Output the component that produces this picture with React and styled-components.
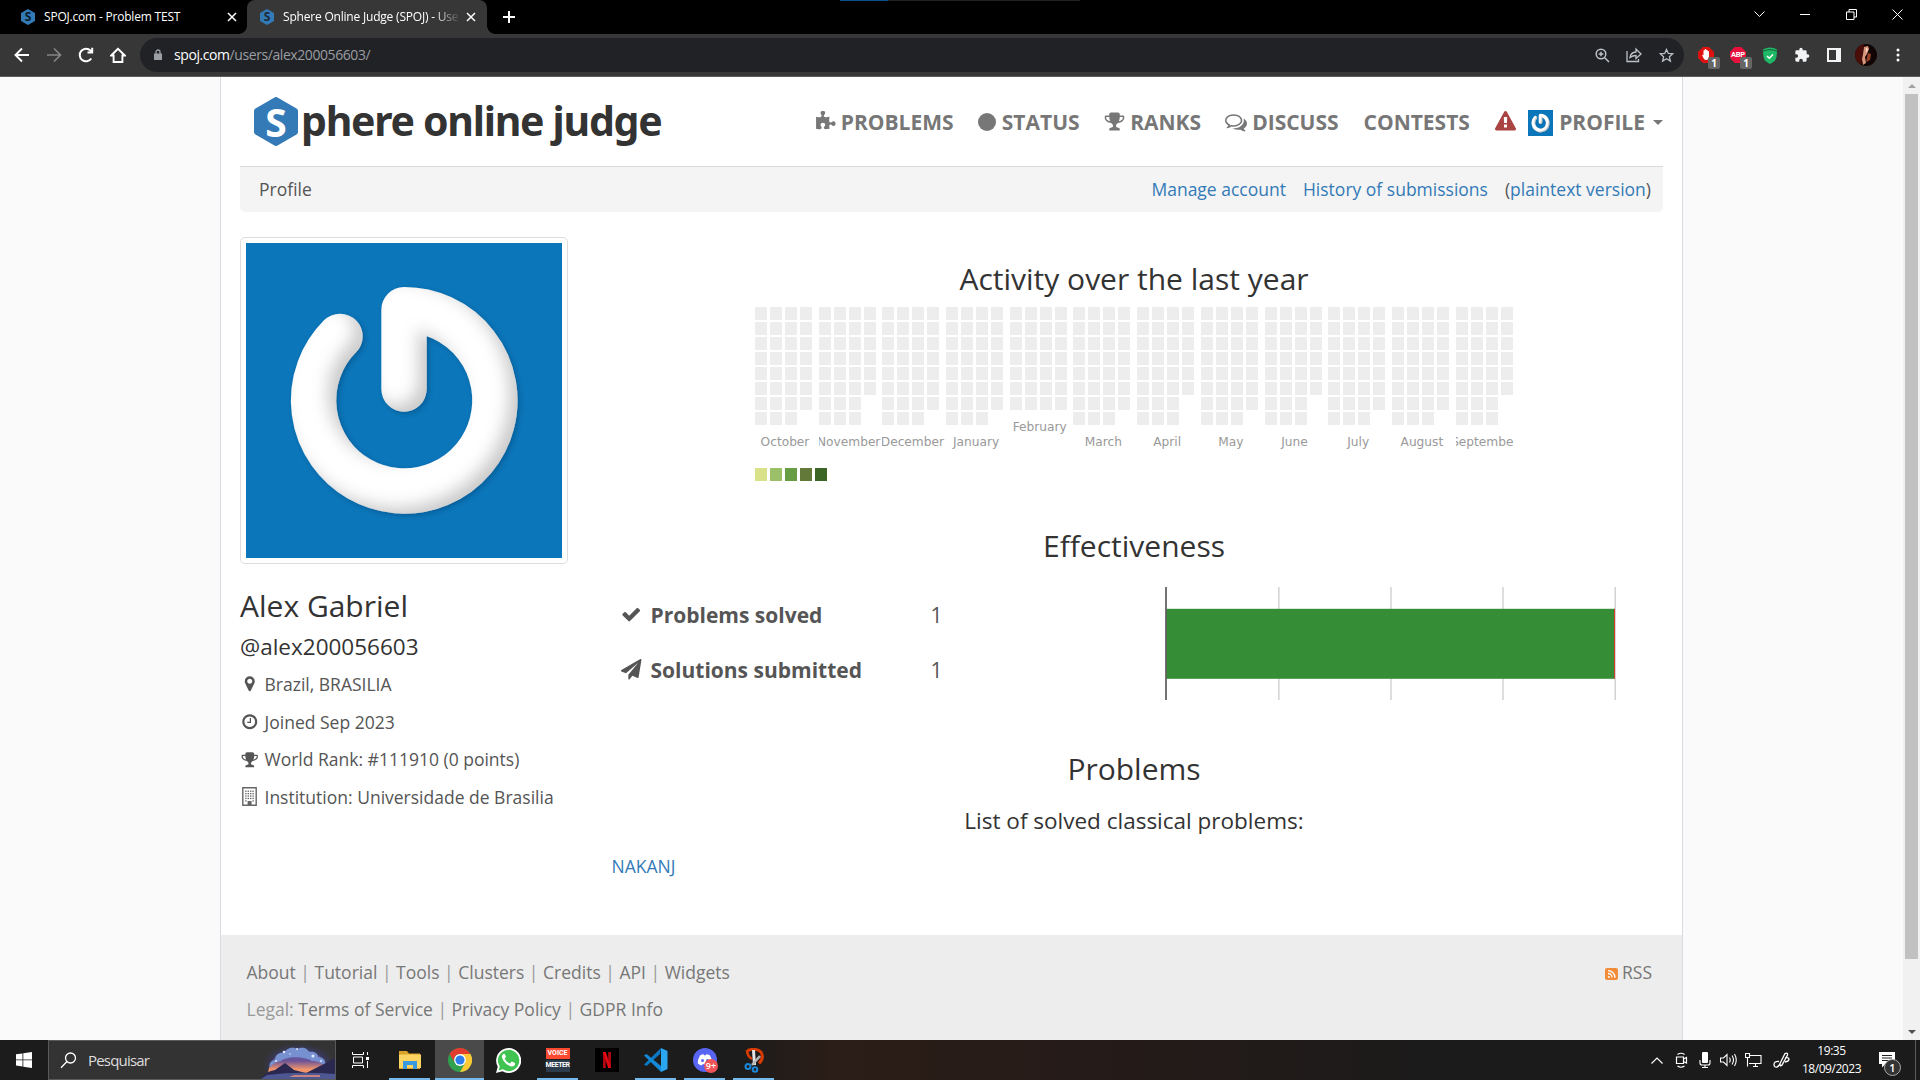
import React from "react";
import styled, { createGlobalStyle, css } from "styled-components";

const sans = `"Open Sans", "Noto Sans", sans-serif`;

const Global = createGlobalStyle`
  * { box-sizing: border-box; }
  html, body { margin: 0; padding: 0; background: #000; overflow: hidden; }
  body { font-family: ${sans}; font-size: 17.5px; color: #555; }
  svg { display: block; flex: none; }
`;

const Screen = styled.div`
  width: 1920px;
  height: 1080px;
  display: flex;
  flex-direction: column;
  overflow: hidden;
`;

/* ---------- browser chrome ---------- */
const TabStrip = styled.div`
  position: relative;
  height: 34px;
  flex: none;
  display: flex;
  background: #000;
`;
const SnapHint = styled.div`
  position: absolute;
  top: 0;
  left: 840px;
  width: 240px;
  height: 1px;
  background: linear-gradient(90deg, #0b4f8c 48px, #222 48px);
`;
const Tab = styled.div`
  position: relative;
  width: ${(p) => p.$w}px;
  height: 34px;
  display: flex;
  align-items: center;
  padding: 0 ${(p) => p.$end}px 0 ${(p) => p.$pad}px;
  color: #fff;
  ${(p) =>
    p.$active &&
    css`
      background: #373737;
      border-radius: 8px 8px 0 0;
      &::before, &::after {
        content: "";
        position: absolute;
        bottom: 0;
        width: 8px;
        height: 8px;
      }
      &::before { left: -8px; background: radial-gradient(circle at 0 0, #000 7.5px, #373737 8px); }
      &::after { right: -8px; background: radial-gradient(circle at 100% 0, #000 7.5px, #373737 8px); }
    `}
`;
const TabTitle = styled.div`
  width: ${(p) => p.$w}px;
  margin-left: 9px;
  overflow: hidden;
  white-space: nowrap;
  font-size: 12px;
  line-height: 18px;
  letter-spacing: ${(p) => p.$ls || 0}px;
  ${(p) => p.$fade && css`-webkit-mask-image: linear-gradient(90deg, #000 86%, transparent 101%);`}
`;
const TabClose = styled.div`
  margin-left: auto;
`;
const NewTab = styled.div`
  width: 44px;
  height: 34px;
  display: flex;
  align-items: center;
  justify-content: center;
`;
const WindowButtons = styled.div`
  margin-left: auto;
  display: flex;
  height: 28px;
`;
const Slot = styled.div`
  position: relative;
  width: ${(p) => p.$w || 32}px;
  display: flex;
  align-items: center;
  justify-content: center;
`;
const Toolbar = styled.div`
  height: 43px;
  flex: none;
  display: flex;
  padding: 0 6px 0 5.5px;
  background: #373737;
  border-bottom: 1px solid #5c5c5c;
`;
const Omnibox = styled.div`
  width: 1544px;
  height: 34px;
  margin: 4px 6px 0 6.5px;
  border-radius: 17px;
  background: #202226;
  display: flex;
  align-items: center;
  padding: 0 2px 0 14px;
`;
const Url = styled.div`
  margin-left: 12px;
  flex: 1;
  font-size: 14px;
  letter-spacing: -0.42px;
  line-height: 18px;
  color: #9a9da1;
  b { font-weight: 400; color: #fff; }
`;
const Badge = styled.span`
  position: absolute;
  left: 18px;
  top: 23px;
  width: 12px;
  height: 12px;
  border-radius: 2px;
  background: #666;
  color: #fff;
  font: 700 10px/12px ${sans};
  text-align: center;
`;
const Portrait = styled.div`
  width: 22px;
  height: 22px;
  border-radius: 50%;
  overflow: hidden;
`;
const Abp = styled.div`
  width: 16px;
  height: 16px;
  display: flex;
  justify-content: center;
  clip-path: polygon(30% 0, 70% 0, 100% 30%, 100% 70%, 70% 100%, 30% 100%, 0 70%, 0 30%);
  background: #e8103c;
  span { color: #fff; font: 700 7.5px/16px "Roboto", sans-serif; letter-spacing: -0.3px; }
`;

/* ---------- page ---------- */
const Viewport = styled.div`
  height: 963px;
  flex: none;
  display: flex;
  background: #fafafa;
`;
const Page = styled.div`
  width: 1463px;
  margin-left: 220px;
  background: #fff;
  border: solid #d8dce2;
  border-width: 0 1px;
  display: flex;
  flex-direction: column;
`;
const ScrollBar = styled.div`
  margin-left: auto;
  width: 17px;
  background: #f1f1f1;
  display: flex;
  flex-direction: column;
  align-items: center;
  justify-content: space-between;
`;
const Thumb = styled.div`
  width: 13px;
  height: 865px;
  margin-bottom: 64px;
  background: #c1c1c1;
`;
const ScrollArrow = styled.div`
  width: 17px;
  height: 17px;
  display: flex;
  align-items: center;
  justify-content: center;
`;
const Header = styled.header`
  height: 89px;
  display: flex;
  margin: 0 19px;
  padding-left: 14px;
`;
const Logo = styled.div`
  width: 564.5px;
  display: flex;
  align-items: flex-start;
  padding-top: 20px;
`;
const LogoText = styled.div`
  margin: -7px 0 0 3px;
  font: 700 41px/60px "Noto Sans", sans-serif;
  letter-spacing: ${(p) => p.$ls}px;
  white-space: nowrap;
  color: #333;
`;
const Nav = styled.nav`
  display: flex;
  align-items: center;
  height: 89px;
`;
const NavItem = styled.div`
  flex: 0 0 ${(p) => p.$w}px;
  display: flex;
  align-items: center;
  font-size: 21px;
  font-weight: 700;
  color: #777;
  white-space: nowrap;
  gap: ${(p) => p.$gap || 5}px;
`;
const Dot = styled.i`
  width: 18px;
  height: 18px;
  border-radius: 50%;
  background: #777;
`;
const MiniAvatar = styled.div`
  width: 25px;
  height: 26px;
  margin-top: 2px;
`;
const Caret = styled.i`
  margin: 2px 0 0 2px;
  border: 5px solid transparent;
  border-top-color: #777;
  border-bottom: 0;
`;
const SubBar = styled.div`
  height: 46px;
  margin: 0 19px;
  padding: 0 12px 2px 19px;
  border-top: 1px solid #d8dadd;
  border-radius: 0 0 5px 5px;
  background: #f4f4f4;
  display: flex;
  align-items: center;
`;
const Spacer = styled.div`
  flex: 1;
`;
const Link = styled.a`
  color: #337ab7;
  white-space: nowrap;
`;
const SubLink = styled(Link)`
  margin-left: ${(p) => p.$ml || 0}px;
`;
const Paren = styled.span`
  margin-left: 17px;
`;
const Columns = styled.div`
  height: 723px;
  display: flex;
  padding: 0 19px;
`;
const Side = styled.aside`
  width: 328px;
  margin-right: 37px;
  padding-top: 25px;
`;
const Thumbnail = styled.div`
  width: 328px;
  height: 327px;
  padding: 5px;
  border: 1px solid #ddd;
  border-radius: 5px;
`;
const Name = styled.h3`
  margin: 25px 0 0;
  font-size: 30px;
  font-weight: 400;
  line-height: 34px;
  color: #333;
`;
const Handle = styled.h4`
  margin: 11px 0 5.4px;
  font-size: 22.5px;
  font-weight: 400;
  line-height: 26px;
  color: #333;
`;
const Fact = styled.div`
  display: flex;
  align-items: center;
  height: 37.6px;
  white-space: nowrap;
`;
const FactIcon = styled.div`
  width: 24.5px;
  display: flex;
  justify-content: center;
  padding-right: 5px;
`;
const Main = styled.main`
  width: 1058px;
  display: flex;
  flex-direction: column;
`;
const Title = styled.h3`
  margin: ${(p) => p.$mt}px 0 0;
  font-size: 30px;
  font-weight: 400;
  line-height: 34px;
  text-align: center;
  color: #333;
`;
const Calendar = styled.div`
  display: flex;
  height: 161px;
  margin: 11px 0 0 150px;
`;
const Month = styled.div`
  flex: 0 0 ${(p) => (p.$last ? 58.5 : 63.7)}px;
  overflow: hidden;
`;
const Weeks = styled.div`
  display: flex;
  align-items: flex-start;
  gap: 3px;
`;
const Week = styled.div`
  width: 12px;
  display: flex;
  flex-direction: column;
  gap: 2px;
`;
const Day = styled.div`
  width: 12px;
  height: 13px;
  background: ${(p) => p.$c || "#ededed"};
`;
const MonthName = styled.div`
  display: flex;
  justify-content: center;
  width: ${(p) => (p.$last ? 58.5 : 60)}px;
  height: 30px;
  margin-top: 2px;
  font: 12.2px/30px "DejaVu Sans", sans-serif;
  color: #999;
`;
const Legend = styled.div`
  display: flex;
  gap: 3px;
  height: 13px;
  margin-left: 150px;
`;
const Stats = styled.div`
  display: flex;
  height: 113px;
  margin-top: 24px;
`;
const StatList = styled.div`
  width: 560px;
`;
const Stat = styled.div`
  display: flex;
  align-items: center;
  height: 55px;
  padding-left: 16px;
  font-size: 21px;
`;
const StatLabel = styled.b`
  width: 280px;
  margin-left: 9px;
`;
const SubTitle = styled.h4`
  margin: 22px 0 0;
  font-size: 22.5px;
  font-weight: 400;
  line-height: 26px;
  text-align: center;
  color: #333;
`;
const Solved = styled.div`
  margin: 19px 0 0 6.5px;
  line-height: 26px;
`;
const Footer = styled.footer`
  flex: 1;
  display: flex;
  justify-content: space-between;
  padding: 19px 30px 0 25.5px;
  background: #ededed;
  color: #999;
  line-height: 37.4px;
`;
const FootLine = styled.div`
  display: flex;
  gap: ${(p) => p.$gap || 0}px;
  align-items: center;
  height: 37.4px;
  white-space: pre;
`;
const FootLink = styled.a`
  color: #777;
`;

/* ---------- taskbar ---------- */
const Taskbar = styled.div`
  height: 40px;
  flex: none;
  display: flex;
  color: #fff;
  background: linear-gradient(90deg, #1c1c1c 0, #1c1c1c 740px, #2b1d17 830px, #251b18 1100px, #1b1b1b 1450px);
`;
const SearchBox = styled.div`
  width: 288px;
  display: flex;
  align-items: center;
  background: #333;
  border: 1px solid #5a5a5a;
  font-size: 15px;
  color: #ddd;
`;
const SearchText = styled.span`
  flex: 1;
  margin-left: 0;
  letter-spacing: -0.8px;
`;
const AppButton = styled.div`
  position: relative;
  width: 49px;
  height: 40px;
  display: flex;
  align-items: center;
  justify-content: center;
  ${(p) => p.$active && css`background: #4a4a4a;`}
  ${(p) =>
    p.$open &&
    css`
      &::after {
        content: "";
        position: absolute;
        bottom: 0;
        left: ${p.$active ? 0 : 4}px;
        right: ${p.$active ? 0 : 4}px;
        height: 2px;
        background: #76b9ed;
      }
    `}
`;
const VoiceTile = styled.div`
  width: 24px;
  height: 24px;
  font: 700 7px/11px "Roboto", sans-serif;
  text-align: center;
  color: #fff;
  background: linear-gradient(#fc4a32 11px, #1c1c1c 11px, #1c1c1c 12px, #2c3c4c 12px);
`;
const VoiceRow = styled.div`
  height: 12px;
  letter-spacing: ${(p) => p.$ls || 0}px;
`;
const DiscordBadge = styled.span`
  position: absolute;
  right: 11px;
  bottom: 7px;
  width: 14px;
  height: 14px;
  border-radius: 50%;
  background: #ee5457;
  font: 600 9px/14px ${sans};
  text-align: center;
`;
const Tray = styled.div`
  margin-left: auto;
  display: flex;
`;
const Clock = styled.div`
  width: 69px;
  display: flex;
  flex-direction: column;
  padding-top: 2px;
  align-items: center;
  font-size: 12px;
  line-height: 18px;
  letter-spacing: -0.45px;
`;
const NoteBadge = styled.span`
  position: absolute;
  left: 18px;
  top: 19px;
  width: 17px;
  height: 17px;
  border: 1px solid #aaa;
  border-radius: 50%;
  background: #333;
  font: 600 11px/15px ${sans};
  text-align: center;
`;
const ShowDesktop = styled.div`
  width: 5px;
  margin-left: 8px;
  border-left: 1px solid #5a5a5a;
`;

/* ---------- drawings ---------- */
const FA = {
  puzzle: "M1755 1083q0 81-44.5 135t-123.5 54q-41 0-77.5-17.5t-59-38-56.5-38-71-17.5q-110 0-110 124 0 39 16 115t15 115v5q-22 0-33 1-34 3-97.5 11.5t-115.5 13.5-98 5q-61 0-103-26.5t-42-83.5q0-37 17.5-71t38-56.5 38-59 17.5-77.5q0-79-54-123.5t-135-44.5q-84 0-143 45.5t-59 127.5q0 43 15 83t33.5 64.5 33.5 53 15 50.5q0 45-46 89-37 35-117 35-95 0-245-24-9-2-27.5-4t-27.5-4l-13-2q-1 0-3-1-2 0-2-1v-1024q2 1 17.5 3.5t34 5 21.5 3.5q150 24 245 24 80 0 117-35 46-44 46-89 0-22-15-50.5t-33.5-53-33.5-64.5-15-83q0-82 59-127.5t144-45.5q80 0 134 44.5t54 123.5q0 41-17.5 77.5t-38 59-38 56.5-17.5 71q0 57 42 83.5t103 26.5q64 0 180-15t163-17v2q-1 2-3.5 17.5t-5 34-3.5 21.5q-24 150-24 245 0 80 35 117 44 46 89 46 22 0 50.5-15t53-33.5 64.5-33.5 83-15q82 0 127.5 59t45.5 143z",
  trophy: "M522 883q-74-162-74-371h-256v96q0 78 94.5 162t235.5 113zm1078-275v-96h-256q0 209-74 371 141-29 235.5-113t94.5-162zm128-128v128q0 71-41.5 143t-112 130-173 97.5-215.5 44.5q-42 54-95 95-38 34-52.5 72.5t-14.5 89.5q0 54 30.5 91t97.5 37q75 0 133.5 45.5t58.5 114.5v64q0 14-9 23t-23 9h-832q-14 0-23-9t-9-23v-64q0-69 58.5-114.5t133.5-45.5q67 0 97.5-37t30.5-91q0-51-14.5-89.5t-52.5-72.5q-53-41-95-95-113-5-215.5-44.5t-173-97.5-112-130-41.5-143v-128q0-40 28-68t68-28h288v-96q0-66 47-113t113-47h576q66 0 113 47t47 113v96h288q40 0 68 28t28 68z",
  comments: "M704 384q-153 0-286 52t-211.5 141-78.5 191q0 82 53 158t149 132l97 56-35 84q34-20 62-39l44-31 53 10q78 14 153 14 153 0 286-52t211.5-141 78.5-191-78.5-191-211.5-141-286-52zm0-128q191 0 353.5 68.5t256.5 186.5 94 257-94 257-256.5 186.5-353.5 68.5q-86 0-176-16-124 88-278 128-36 9-86 16h-3q-11 0-20.5-8t-11.5-21q-1-3-1-6.5t.5-6.5 2-6l2.5-5 3.5-5.5 4-5 4.5-5 4-4.5q5-6 23-25t26-29.5 22.5-29 25-38.5 20.5-44q-124-72-195-177t-71-224q0-139 94-257t256.5-186.5 353.5-68.5zm822 1169q10 24 20.5 44t25 38.5 22.5 29 26 29.5 23 25q1 1 4 4.5t4.5 5 4 5 3.5 5.5l2.5 5 2 6 .5 6.5-1 6.5q-3 14-13 22t-22 7q-50-7-86-16-154-40-278-128-90 16-176 16-271 0-472-132 58 4 88 4 161 0 309-45t264-129q125-92 192-212t67-254q0-77-23-152 129 71 204 178t75 230q0 120-71 224.5t-195 176.5z",
  warning: "M1024 1375v-190q0-14-9.5-23.5t-22.5-9.5h-192q-13 0-22.5 9.5t-9.5 23.5v190q0 14 9.5 23.5t22.5 9.5h192q13 0 22.5-9.5t9.5-23.5zm-2-374l18-459q0-12-10-19-13-11-24-11h-220q-11 0-24 11-10 7-10 21l17 457q0 10 10 16.5t24 6.5h185q14 0 23.5-6.5t10.5-16.5zm-14-934l768 1408q35 63-2 126-17 29-46.5 46t-63.5 17h-1536q-34 0-63.5-17t-46.5-46q-37-63-2-126l768-1408q17-31 47-49t65-18 65 18 47 49z",
  check: "M1671 566q0 40-28 68l-724 724-136 136q-28 28-68 28t-68-28l-136-136-362-362q-28-28-28-68t28-68l136-136q28-28 68-28t68 28l294 295 656-657q28-28 68-28t68 28l136 136q28 28 28 68z",
  plane: "M1764 11q33 24 27 64l-256 1536q-5 29-32 45-14 8-31 8-11 0-24-5l-453-185-242 295q-18 23-49 23-13 0-22-4-19-7-30.5-23.5t-11.5-36.5v-349l864-1059-1069 925-395-162q-37-14-40-55-2-40 32-59l1664-960q15-9 32-9 20 0 36 11z",
  marker: "M1152 640q0-106-75-181t-181-75-181 75-75 181 75 181 181 75 181-75 75-181zm256 0q0 109-33 179l-364 774q-16 33-47.5 52t-67.5 19-67.5-19-46.5-52l-365-774q-33-70-33-179 0-212 150-362t362-150 362 150 150 362z",
  clock: "M1024 544v448q0 14-9 23t-23 9h-320q-14 0-23-9t-9-23v-64q0-14 9-23t23-9h224v-352q0-14 9-23t23-9h64q14 0 23 9t9 23zm416 352q0-148-73-273t-198-198-273-73-273 73-198 198-73 273 73 273 198 198 273 73 273-73 198-198 73-273zm224 0q0 209-103 385.5t-279.5 279.5-385.5 103-385.5-103-279.5-279.5-103-385.5 103-385.5 279.5-279.5 385.5-103 385.5 103 279.5 279.5 103 385.5z",
};
const Glyph = ({ d, size, fill = "currentColor" }) => (
  <svg width={size} height={size} viewBox="0 0 1792 1792" fill={fill}><path d={d} /></svg>
);
const Building = () => (
  <svg width="15" height="19" viewBox="0 0 15 19">
    <path d="M.8.8h13.4v17.4H.8z" fill="#fff" stroke="#666" strokeWidth="1.4" />
    {[3.6, 6, 8.4, 10.8].map((y) => [3.2, 5.6, 8, 10.4].map((x) => (
      <rect key={x + "-" + y} x={x} y={y} width="1.4" height="1.3" fill="#666" />
    )))}
    <path d="M3.2 13.2h1.4v1.3H3.2zM10.4 13.2h1.4v1.3h-1.4zM5.6 14h4v4h-4z" fill="#666" />
  </svg>
);
const Power = ({ w, h, id }) => (
  <svg width={w} height={h} viewBox="0 0 948 945" preserveAspectRatio="none">
    <defs>
      <filter id={id} x="-20%" y="-20%" width="140%" height="140%">
        <feOffset in="SourceAlpha" dx="-26" dy="-20" result="o" />
        <feGaussianBlur in="o" stdDeviation="24" result="b" />
        <feComposite in="SourceAlpha" in2="b" operator="out" result="rim" />
        <feFlood floodColor="#777" floodOpacity="0.5" />
        <feComposite in2="rim" operator="in" result="shade" />
        <feDropShadow in="SourceGraphic" dx="6" dy="6" stdDeviation="8" floodColor="#043a66" floodOpacity="0.4" result="ds" />
        <feMerge><feMergeNode in="ds" /><feMergeNode in="shade" /></feMerge>
      </filter>
    </defs>
    <rect width="948" height="945" fill="#0b76b9" />
    <path
      d="M282 280A272 272 0 1 0 474 200V438"
      fill="none" stroke="#fff" strokeWidth="136" strokeLinecap="round" strokeLinejoin="round"
      filter={`url(#${id})`}
    />
  </svg>
);
const Hex = styled.div`
  width: ${(p) => p.$w}px;
  height: ${(p) => p.$h}px;
  display: grid;
  place-items: center;
  flex: none;
  & > * { grid-area: 1 / 1; }
  span { font: 700 ${(p) => p.$f}px/1 "Noto Sans", sans-serif; color: ${(p) => p.$c}; }
`;
const Hexagon = ({ w, h, f, c }) => (
  <Hex $w={w} $h={h} $f={f} $c={c}>
    <svg width={w} height={h} viewBox="0 0 44 49" preserveAspectRatio="none">
      <path d="M22 3 41 14v21L22 46 3 35V14z" fill="#337ab7" stroke="#337ab7" strokeWidth="6" strokeLinejoin="round" />
    </svg>
    <span>S</span>
  </Hex>
);
const Line = ({ w = 16, h = w, d, sw = 1, c = "#fff", fill = "none" }) => (
  <svg width={w} height={h} viewBox={`0 0 ${w} ${h}`} fill={fill} stroke={c} strokeWidth={sw}><path d={d} /></svg>
);
const Effectiveness = () => (
  <svg width="480" height="113" viewBox="0 0 480 113">
    <path d="M113.9 0v113M226 0v113M338 0v113M450.2 0v113" stroke="#ccc" strokeWidth="1.3" />
    <rect x="1.5" y="21.8" width="448" height="70" fill="#358d35" />
    <rect x="449" y="21.8" width="1" height="70" fill="#d0402b" />
    <path d="M1 0v113" stroke="#444" strokeWidth="1.5" />
  </svg>
);
const SearchArt = () => (
  <svg width="76" height="38" viewBox="0 0 76 38">
    <defs>
      <radialGradient id="glow"><stop offset=".5" stopColor="#42429a" /><stop offset="1" stopColor="#333" stopOpacity="0" /></radialGradient>
      <linearGradient id="dusk" x2="0" y2="1"><stop offset="0" stopColor="#4b57a8" /><stop offset=".5" stopColor="#6d5397" /><stop offset=".85" stopColor="#f2956a" /></linearGradient>
    </defs>
    <ellipse cx="40" cy="24" rx="40" ry="24" fill="url(#glow)" />
    <path d="M9 32Q12 10 38 8q26 1 34 24z" fill="url(#dusk)" />
    <path d="M11 27c-2-5 2-8 5-8 0-6 5-8 9-7 3-6 10-6 13-4 6-3 11 0 12 3 6-1 9 2 9 5 6 0 9 5 6 9-3-4-8-5-12-5-8-5-25-5-31 0-6 1-9 3-11 7z" fill="#7790cf" />
    <g fill="#dbe8ff"><circle cx="25" cy="11" r="1.3" /><circle cx="38" cy="8" r="1" /><circle cx="54" cy="15" r="1.6" /><circle cx="17" cy="20" r="1" /><circle cx="31" cy="13" r=".8" /><circle cx="62" cy="20" r="1" /></g>
    <path d="M2 38q5-8 14-9l10-7 9 7 12 3 14-7 15-8v21z" fill="#2a2850" />
    <path d="M8 34q32-4 68-1v5H2z" fill="#4d5791" /><path d="M35 34h26v2H30z" fill="#c98282" />
  </svg>
);
const ChromeLogo = () => (
  <svg width="24" height="24" viewBox="0 0 24 24">
    <circle cx="12" cy="12" r="12" fill="#2fa14f" />
    <path d="M12 6h10.4A12 12 0 0 1 12 24l5.2-9z" fill="#fcc934" />
    <path d="M1.6 6A12 12 0 0 1 22.4 6H12a6 6 0 0 0-5.2 9z" fill="#e33b2e" />
    <circle cx="12" cy="12" r="5.9" fill="#fff" /><circle cx="12" cy="12" r="4.6" fill="#2f7de9" />
  </svg>
);
const WhatsApp = () => (
  <svg width="25" height="25" viewBox="0 0 24 24">
    <path d="M12 0a12 12 0 0 0-10.3 18L0 24l6.2-1.6A12 12 0 1 0 12 0z" fill="#fff" />
    <path d="M12 1.8A10.2 10.2 0 0 0 3.6 17.7l-1.1 3.8 4-1A10.2 10.2 0 1 0 12 1.8z" fill="#40c351" />
    <path d="M8.7 6.2c-.5-.9-1-.7-1.6-.5-1.2.8-1.7 2.2-1.2 3.7 1.2 4 4.6 7.2 8.6 8.3 1.9.4 3.7-.6 3.9-2.6 0-.5-.1-.6-.6-.9l-2-1c-.4-.2-.8-.2-1 .2l-.9 1.1c-.2.3-.5.3-.9.1-2-.8-3.5-2.2-4.5-4-.2-.3-.1-.6.1-.8l.8-1c.2-.3.1-.6 0-.8z" fill="#fff" />
  </svg>
);
const Discord = () => (
  <svg width="24" height="24" viewBox="0 0 24 24">
    <circle cx="12" cy="12" r="12" fill="#5865f2" />
    <path d="M7 7.5q2-1.2 3.6-1.3l.5 1h1.8l.5-1Q15 6.3 17 7.5q2.5 4 2.2 8-1.8 1.6-4 2l-.9-1.5q-2.3.5-4.6 0l-.9 1.5q-2.2-.4-4-2-.3-4 2.2-8z" fill="#fff" />
    <circle cx="9.5" cy="12.5" r="1.5" fill="#5865f2" /><circle cx="14.5" cy="12.5" r="1.5" fill="#5865f2" />
  </svg>
);
const Snip = () => (
  <svg width="22" height="25" viewBox="0 0 22 25" fill="none">
    <path d="M4.500 2.500Q13-.5 18 4q3.500 6-2 11.500" stroke="#d83b01" strokeWidth="3" />
    <path d="M4 2q0 6 5 9" stroke="#d83b01" strokeWidth="2.6" />
    <path d="M10.500 2l1 15" stroke="#e4e4e4" strokeWidth="3" /><path d="M17 8l-8 9" stroke="#b9b9b9" strokeWidth="2.6" />
    <circle cx="5" cy="18.500" r="2.500" stroke="#1c86d8" strokeWidth="2" /><circle cx="12" cy="21.500" r="2.300" stroke="#1c86d8" strokeWidth="2" />
  </svg>
);

/* ---------- data ---------- */
const months = [["October", 31], ["November", 30], ["December", 31], ["January", 31], ["February", 28], ["March", 31], ["April", 30], ["May", 31], ["June", 30], ["July", 31], ["August", 31], ["September", 30]];
const weeksOf = (days) => (days === 28 ? [7, 7, 7, 7] : [8, 8, 8, days - 24]);
const legend = ["#dae289", "#9cc069", "#669d45", "#637939", "#3b6427"];
const footLinks = ["About", "Tutorial", "Tools", "Clusters", "Credits", "API", "Widgets"];
const legalLinks = ["Terms of Service", "Privacy Policy", "GDPR Info"];
const Joined = ({ items }) => items.map((t, i) => (
  <React.Fragment key={t}>{i > 0 && " | "}<FootLink>{t}</FootLink></React.Fragment>
));

const X = "M1 1l8 8M9 1L1 9";

export default function App() {
  return (
    <Screen>
      <Global />
      <TabStrip>
        <SnapHint />
        <Tab $w={247} $pad={21} $end={10}>
          <Hexagon w={14} h={16} f={12} c="#0a1a2a" />
          <TabTitle $w={176} $ls={-0.2}>SPOJ.com - Problem TEST</TabTitle>
          <TabClose><Line w={10} d={X} sw={1.5} /></TabClose>
        </Tab>
        <Tab $w={240} $pad={13} $end={11} $active>
          <Hexagon w={14} h={16} f={12} c="#1b2a38" />
          <TabTitle $w={176} $ls={-0.2} $fade>Sphere Online Judge (SPOJ) - User</TabTitle>
          <TabClose><Line w={10} d={X} sw={1.5} /></TabClose>
        </Tab>
        <NewTab><Line w={14} d="M7 1v12M1 7h12" sw={2} /></NewTab>
        <WindowButtons>
          <Slot $w={46}><Line w={11} h={6} d="M.5.5l5 5 5-5" /></Slot>
          <Slot $w={46}><Line w={10} h={1} d="M0 .5h10" /></Slot>
          <Slot $w={46}><Line w={11} d="M.5 3h7.5v7.5H.5zM3 3V.5h7.5V8H8" /></Slot>
          <Slot $w={46}><Line w={11} d="M.5.5l10 10M10.5.5l-10 10" /></Slot>
        </WindowButtons>
      </TabStrip>
      <Toolbar>
        <Slot><Line w={16} d="M15 8H2M8 1.5L1.5 8 8 14.5" sw={1.9} /></Slot>
        <Slot><Line w={16} d="M1 8h13M8 1.5L14.5 8 8 14.5" sw={1.7} c="#858585" /></Slot>
        <Slot><Line w={16} d="M13.3 11.5A6.3 6.3 0 1 1 12.6 3.6L14 5M14.2.8v4.7H9.5" sw={2} /></Slot>
        <Slot><Line w={16} d="M8 1.8L1.2 8.5h2.4V15h8.8V8.5h2.4z" sw={1.9} /></Slot>
        <Omnibox>
          <svg width="8" height="12" viewBox="0 0 8 12"><path d="M0 4.500h8V11H0z" fill="#9aa0a6" /><path d="M2 5V3a2 2 0 0 1 4 0v2" fill="none" stroke="#9aa0a6" strokeWidth="1.3" /></svg>
          <Url><b>spoj.com</b>/users/alex200056603/</Url>
          <Slot><Line w={15} d="M6 1.2a4.8 4.8 0 1 0 0 9.6 4.8 4.8 0 0 0 0-9.6zM9.5 9.5l4.5 4.5M3.7 6h4.6M6 3.7v4.6" sw={1.5} c="#bdc1c6" /></Slot>
          <Slot><Line w={16} d="M1 4v10.5h11.5V12M4 10.5Q4.5 5.5 10 5V2l5 5-5 4.5V8.5Q6.5 8.5 4 10.5z" sw={1.3} c="#bdc1c6" /></Slot>
          <Slot><Line w={15} d="M7.5 1.5l1.8 4 4.4.4-3.3 2.9 1 4.3-3.9-2.3-3.9 2.3 1-4.3L1.3 5.9l4.400-.4z" sw={1.3} c="#bdc1c6" /></Slot>
        </Omnibox>
        <Slot>
          <svg width="16" height="16" viewBox="0 0 16 16"><path d="M5 0h6l5 5v6l-5 5H5l-5-5V5z" fill="#e0120f" /><path d="M4 7.5l1.5.8V3.5q.7-.8 1.3 0V2.3q.8-.8 1.4 0v.9q.8-.7 1.4 0v1q.9-.6 1.4.1v5q0 3.5-3 3.7-2.3 0-4-5.5z" fill="#fff" /></svg>
          <Badge>1</Badge>
        </Slot>
        <Slot>
          <Abp><span>ABP</span></Abp>
          <Badge>1</Badge>
        </Slot>
        <Slot>
          <svg width="14" height="17" viewBox="0 0 14 17"><path d="M0 2.5Q7-1.5 14 2.5q.1 8-2 11Q9 16 7 17q-2-1-5-3.5-2.1-3-2-11z" fill="#1fb866" /><path d="M0 4.3Q7 1 14 4.3" stroke="#1b5c3c" fill="none" /><path d="M4 9l2.3 2.3L10 7.5" stroke="#fff" strokeWidth="1.5" fill="none" /></svg>
        </Slot>
        <Slot>
          <svg width="16" height="16" viewBox="0 0 24 24" fill="#f1f3f4"><path d="M20.5 11H19V7a2 2 0 0 0-2-2h-4V3.5a2.5 2.5 0 0 0-5 0V5H4a2 2 0 0 0-2 2v3.8h1.5a2.7 2.7 0 0 1 0 5.4H2V20a2 2 0 0 0 2 2h3.8v-1.5a2.7 2.7 0 0 1 5.4 0V22H17a2 2 0 0 0 2-2v-4h1.5a2.5 2.5 0 0 0 0-5z" /></svg>
        </Slot>
        <Slot>
          <svg width="14" height="14" viewBox="0 0 14 14"><path d="M1 1h12v12H1z" fill="none" stroke="#f1f3f4" strokeWidth="2" /><path d="M9 1h4v12H9z" fill="#f1f3f4" /></svg>
        </Slot>
        <Slot>
          <Portrait>
            <svg width="22" height="22" viewBox="0 0 22 22"><rect width="22" height="22" fill="#100504" /><path d="M0 0h9L6 22H0z" fill="#4a0e0a" /><path d="M9 3l4-1 1 3-2 5-2 3 1 6-3 2-1-6 1-5z" fill="#d9967a" /><path d="M13 9l3 1-1 6-4 2z" fill="#9a4228" /><path d="M11 4l2 1-2 4z" fill="#fbe3d3" /></svg>
          </Portrait>
        </Slot>
        <Slot><svg width="4" height="14" viewBox="0 0 4 14" fill="#fff"><circle cx="2" cy="2" r="1.5" /><circle cx="2" cy="7" r="1.5" /><circle cx="2" cy="12" r="1.5" /></svg></Slot>
      </Toolbar>

      <Viewport>
        <Page>
          <Header>
            <Logo>
              <Hexagon w={44} h={49} f={39} c="#fff" />
              <LogoText $ls={-1.28}>phere online judge</LogoText>
            </Logo>
            <Nav>
              <NavItem $w={163}><Glyph d={FA.puzzle} size={21} />PROBLEMS</NavItem>
              <NavItem $w={126.4} $gap={6}><Dot />STATUS</NavItem>
              <NavItem $w={121}><Glyph d={FA.trophy} size={21} />RANKS</NavItem>
              <NavItem $w={138.4}><Glyph d={FA.comments} size={22} />DISCUSS</NavItem>
              <NavItem $w={131}>CONTESTS</NavItem>
              <NavItem $w={33.6}><Glyph d={FA.warning} size={21} fill="#a94442" /></NavItem>
              <NavItem $w={134} $gap={6}>
                <MiniAvatar><Power w={25} h={26} id="small" /></MiniAvatar>PROFILE<Caret />
              </NavItem>
            </Nav>
          </Header>
          <SubBar>
            Profile<Spacer />
            <SubLink>Manage account</SubLink>
            <SubLink $ml={17}>History of submissions</SubLink>
            <Paren>(<Link>plaintext version</Link>)</Paren>
          </SubBar>
          <Columns>
            <Side>
              <Thumbnail><Power w={316} h={315} id="large" /></Thumbnail>
              <Name>Alex Gabriel</Name>
              <Handle>@alex200056603</Handle>
              <Fact><FactIcon><Glyph d={FA.marker} size={17.5} /></FactIcon>Brazil, BRASILIA</Fact>
              <Fact><FactIcon><Glyph d={FA.clock} size={17.5} /></FactIcon>Joined Sep 2023</Fact>
              <Fact><FactIcon><Glyph d={FA.trophy} size={17.5} /></FactIcon>World Rank: #111910 (0 points)</Fact>
              <Fact><FactIcon><Building /></FactIcon>Institution: Universidade de Brasilia</Fact>
            </Side>
            <Main>
              <Title $mt={50}>Activity over the last year</Title>
              <Calendar>
                {months.map(([name, days], i) => (
                  <Month key={name} $last={i === 11}>
                    <Weeks>
                      {weeksOf(days).map((n, w) => (
                        <Week key={w}>{Array.from({ length: n }, (_, k) => <Day key={k} />)}</Week>
                      ))}
                    </Weeks>
                    <MonthName $last={i === 11}>{name}</MonthName>
                  </Month>
                ))}
              </Calendar>
              <Legend>{legend.map((c) => <Day key={c} $c={c} />)}</Legend>
              <Title $mt={48}>Effectiveness</Title>
              <Stats>
                <StatList>
                  <Stat><Glyph d={FA.check} size={20.5} /><StatLabel>Problems solved</StatLabel>1</Stat>
                  <Stat><Glyph d={FA.plane} size={20.5} /><StatLabel>Solutions submitted</StatLabel>1</Stat>
                </StatList>
                <Effectiveness />
              </Stats>
              <Title $mt={52}>Problems</Title>
              <SubTitle>List of solved classical problems:</SubTitle>
              <Solved><Link>NAKANJ</Link></Solved>
            </Main>
          </Columns>
          <Footer>
            <div>
              <FootLine><span><Joined items={footLinks} /></span></FootLine>
              <FootLine><span>Legal: <Joined items={legalLinks} /></span></FootLine>
            </div>
            <FootLine $gap={4}>
              <svg width="13" height="14" viewBox="0 -2 13 14"><rect width="13" height="12" rx="2" fill="#f28c38" /><path d="M3 5.5a4 4 0 0 1 4 4M3 2.7a7 7 0 0 1 7 7" stroke="#fff" strokeWidth="1.3" fill="none" /><circle cx="3.8" cy="8.9" r="1" fill="#fff" /></svg>
              <FootLink>RSS</FootLink>
            </FootLine>
          </Footer>
        </Page>
        <ScrollBar>
          <ScrollArrow><svg width="8" height="4" viewBox="0 0 8 4"><path d="M0 4l4-4 4 4z" fill="#a3a3a3" /></svg></ScrollArrow>
          <Thumb />
          <ScrollArrow><svg width="8" height="4" viewBox="0 0 8 4"><path d="M0 0l4 4 4-4z" fill="#505050" /></svg></ScrollArrow>
        </ScrollBar>
      </Viewport>

      <Taskbar>
        <Slot $w={48}>
          <svg width="16" height="16" viewBox="0 0 16 16" fill="#fff"><path d="M0 2.3L6.5 1.4v6.1H0zM7.3 1.3L16 0v7.5H7.3zM0 8.3h6.5v6.2L0 13.6zM7.3 8.3H16V16l-8.7-1.3z" /></svg>
        </Slot>
        <SearchBox>
          <Slot $w={39}><Line w={17} d="M10.5 1a5 5 0 1 0 0 10 5 5 0 0 0 0-10zM7 9.5L1 15.8" sw={1.3} /></Slot>
          <SearchText>Pesquisar</SearchText>
          <SearchArt />
        </SearchBox>
        <AppButton>
          <svg width="17" height="16" viewBox="0 0 17 16" fill="none" stroke="#fff"><path d="M.5 0v2.5h11V0M.5 16v-2.5h11V16M1.500 5h9v6h-9zM15.5 0v3M15.5 9v7" /><path d="M14 5h3v3h-3z" fill="#fff" stroke="none" /></svg>
        </AppButton>
        <AppButton $open>
          <svg width="22" height="19" viewBox="0 0 22 19"><path d="M0 0h8l2 2.5h11V18H0z" fill="#dba22a" /><path d="M0 3.500h22V17H0z" fill="#fcd462" /><path d="M4 10h14v8h-4v-4H8v4H4z" fill="#3a9ae0" /></svg>
        </AppButton>
        <Gap />
        <AppButton $open $active><ChromeLogo /></AppButton>
        <AppButton><WhatsApp /></AppButton>
        <AppButton $open><VoiceTile><VoiceRow>VOICE</VoiceRow><VoiceRow $ls={-0.5}>MEETER</VoiceRow></VoiceTile></AppButton>
        <AppButton>
          <svg width="24" height="24" viewBox="0 0 24 24"><path fill="#000" d="M0 0h24v24H0z" /><path fill="#b1060f" d="M8 4h2.8v16H8zM13.2 4H16v16h-2.8z" /><path fill="#e50914" d="M8 4h2.8L16 20h-2.8z" /></svg>
        </AppButton>
        <AppButton $open>
          <svg width="25" height="24" viewBox="0 0 25 24"><path d="M18 0l-1 6L3.5 18 1 16.5z" fill="#0b78c5" /><path d="M1 7.5L3.5 6 18 18v6z" fill="#148ad6" /><path d="M18 0l6.5 3v18L18 24z" fill="#2aa7f0" /></svg>
        </AppButton>
        <AppButton $open><Discord /><DiscordBadge>9+</DiscordBadge></AppButton>
        <AppButton $open><Snip /></AppButton>
        <Tray>
          <Slot $w={24}><Line w={12} h={7} d="M.5 6.5l5.5-5.5 5.5 5.5" sw={1.2} /></Slot>
          <Slot $w={24}><Line w={13} h={16} d="M1.5 5h7v6.5h-7zM8.5 7l3-1.5v5.5l-3-1.5M2.5 2.5q3.5-2.5 7 0M2.5 14q3.5 2.5 7 0" sw={1.2} /></Slot>
          <Slot $w={23}>
            <svg width="12" height="16" viewBox="0 0 12 16"><rect x="3" width="6" height="11" rx="1" fill="#fff" /><path d="M1 8v3q0 2 2 2h6q2 0 2-2V8M6 13v2.5M3 15.5h6" stroke="#fff" strokeWidth="1.1" fill="none" /></svg>
          </Slot>
          <Slot $w={25}><Line w={17} h={14} d="M.5 5h3L7 1.5v11L3.5 9h-3zM9.5 4.5q1.5 2.5 0 5M12 2.5q3 4.5 0 9M14.500 1q3.5 6 0 12" sw={1.1} /></Slot>
          <Slot $w={24}><Line w={17} h={14} d="M4 2.5h12v8H4M.5.5h4v4h-4zM2.5 4.500v9M8 13.500h5M10.500 10.500v3" sw={1.1} /></Slot>
          <Slot $w={32}><Line w={17} h={16} d="M6 9.5Q1 9 1 12.5q0 3 3 2.5 2-.5 3-3.5L12 1.5q3-1 2.5 1.5L9 13q-2 2-2-1.5M12 6q4-1 4 1.5-.5 2-4 2.5" sw={1.3} /></Slot>
          <Clock><span>19:35</span><span>18/09/2023</span></Clock>
          <Slot $w={41}>
            <svg width="16" height="16" viewBox="0 0 16 16"><path d="M0 0h16v12H6.5L3 15.500V12H0z" fill="#fff" /><path d="M3 3.500h10M3 6h10M3 8.500h7" stroke="#222" /></svg>
            <NoteBadge>1</NoteBadge>
          </Slot>
          <ShowDesktop />
        </Tray>
      </Taskbar>
    </Screen>
  );
}

const Gap = styled.div`
  width: 1px;
`;
